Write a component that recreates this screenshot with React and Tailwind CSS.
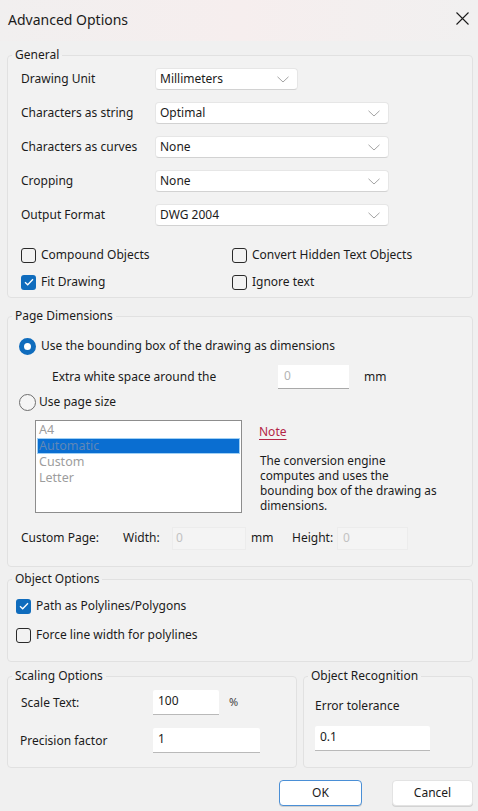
import React from "react";

const font = { fontFamily: '"Noto Sans", "Open Sans", sans-serif' };

function Chevron() {
  return (
    <svg width="12" height="7" viewBox="0 0 12 7" className="shrink-0">
      <path d="M0.5 0.8 L6 6 L11.5 0.8" fill="none" stroke="#a3a3a3" strokeWidth="1" />
    </svg>
  );
}

function Select({ value, width }) {
  return (
    <div
      className={`h-[22px] ${width} flex items-center justify-between pl-[4px] pr-[8px] bg-white border border-[#e6e6e6] border-b-[#d2d2d2] rounded-[4px] text-[12px] text-[#1b1b1b]`}
    >
      <span>{value}</span>
      <Chevron />
    </div>
  );
}

function Checkbox({ checked }) {
  if (checked) {
    return (
      <div className="w-[15px] h-[15px] rounded-[3px] bg-[#0f6cbd] flex items-center justify-center shrink-0">
        <svg width="10" height="8" viewBox="0 0 10 8">
          <path d="M1 4.2 L3.7 6.8 L9 1.2" fill="none" stroke="white" strokeWidth="1.3" />
        </svg>
      </div>
    );
  }
  return <div className="w-[15px] h-[15px] rounded-[3px] border-[1.5px] border-[#2a2a2a] shrink-0" />;
}

function CheckRow({ checked, label }) {
  return (
    <div className="h-[20px] flex items-center gap-[5px] text-[12px] text-[#1b1b1b]">
      <Checkbox checked={checked} />
      <span>{label}</span>
    </div>
  );
}

function Radio({ checked }) {
  if (checked) {
    return <div className="w-[17px] h-[17px] rounded-full border-[5px] border-[#0f6cbd] bg-white shrink-0" />;
  }
  return <div className="w-[17px] h-[17px] rounded-full border border-[#6e6e6e] bg-[#f5f5f5] shrink-0" />;
}

// Windows-style group box: legend sits on the top border, body keeps its own padding
function Group({ title, className = "", bodyClass = "", children }) {
  return (
    <fieldset className={`border border-[#e1e1e1] rounded-[4px] bg-[#f2f2f2] ${className}`}>
      <legend className="ml-[4px] px-[3px] text-[12px] leading-[16px] text-[#1b1b1b]">{title}</legend>
      <div className={bodyClass}>{children}</div>
    </fieldset>
  );
}

function TextInput({ value, width }) {
  return (
    <div
      className={`h-[25px] ${width} bg-white border-b border-[#b9b9b9] rounded-t-[2px] pl-[5px] pt-[2px] text-[12px] text-[#1b1b1b]`}
    >
      {value}
    </div>
  );
}

const noteLines = [
  "The conversion engine",
  "computes and uses the",
  "bounding box of the drawing as",
  "dimensions.",
];

export default function App() {
  const general = [
    ["Drawing Unit", "Millimeters", "w-[143px]"],
    ["Characters as string", "Optimal", "w-[234px]"],
    ["Characters as curves", "None", "w-[234px]"],
    ["Cropping", "None", "w-[234px]"],
    ["Output Format", "DWG 2004", "w-[234px]"],
  ];

  return (
    <div className="w-[478px] h-[811px] bg-[#f0f0f0] overflow-hidden" style={font}>
      {/* title bar */}
      <div className="h-[41px] flex items-center justify-between pl-[8px] pr-[9px] bg-gradient-to-r from-[#f1efef] via-[#f6eeee] to-[#f1f0f0]">
        <span className="text-[14px] text-[#1b1b1b] -mt-[3px]">Advanced Options</span>
        <svg width="13" height="13" viewBox="0 0 13 13" className="-mt-[4px]">
          <path d="M0.5 0.5 L12.5 12.5 M12.5 0.5 L0.5 12.5" stroke="#1b1b1b" strokeWidth="1.1" />
        </svg>
      </div>

      <div className="pl-[7px] pr-[5px] flex flex-col">
        {/* General */}
        <Group title="General" className="mt-[6px]" bodyClass="pl-[13px] pt-[5px] pb-[5px]">
          <div className="flex flex-col gap-[12px]">
            {general.map(([label, value, w]) => (
              <div key={label} className="flex items-center">
                <span className="w-[134px] text-[12px] text-[#1b1b1b]">{label}</span>
                <Select value={value} width={w} />
              </div>
            ))}
          </div>
          <div className="grid grid-cols-[211px_1fr] gap-y-[7px] mt-[19px]">
            <CheckRow label="Compound Objects" />
            <CheckRow label="Convert Hidden Text Objects" />
            <CheckRow checked label="Fit Drawing" />
            <CheckRow label="Ignore text" />
          </div>
        </Group>

        {/* Page Dimensions */}
        <Group title="Page Dimensions" className="mt-[10px]" bodyClass="pt-[12px] pb-[16px]">
          <div className="pl-[11px] h-[20px] flex items-center gap-[5px] text-[12px] text-[#1b1b1b]">
            <Radio checked />
            <span>Use the bounding box of the drawing as dimensions</span>
          </div>
          <div className="pl-[44px] mt-[9px] flex items-center text-[12px] text-[#1b1b1b]">
            <span className="w-[226px]">Extra white space around the</span>
            <div className="h-[24px] w-[71px] bg-white border-b border-[#a9a9a9] pl-[6px] pt-[2px] text-[#b3b3b3]">0</div>
            <span className="ml-[15px]">mm</span>
          </div>
          <div className="pl-[11px] mt-[3px] h-[20px] flex items-center gap-[3px] text-[12px] text-[#1b1b1b]">
            <Radio />
            <span>Use page size</span>
          </div>
          <div className="pl-[27px] mt-[8px] flex">
            <div className="w-[207px] h-[93px] border border-[#8d8d8d] bg-white p-[1px] text-[12.5px] text-[#9d9d9d]">
              <div className="h-[16px] leading-[16px] pl-[2px]">A4</div>
              <div className="h-[16px] leading-[14px] pl-[1px] bg-[#0a6ed1] border border-[#9fd0f5] text-[#5f87b7]">Automatic</div>
              <div className="h-[16px] leading-[16px] pl-[2px]">Custom</div>
              <div className="h-[16px] leading-[16px] pl-[2px]">Letter</div>
            </div>
            <div className="ml-[17px] pt-[4px] text-[12px] text-[#1b1b1b]">
              <div className="text-[#b42646] underline underline-offset-[3px] decoration-[1px] leading-[16px]">Note</div>
              <div className="mt-[13px] pl-[1px] flex flex-col">
                {noteLines.map((line) => (
                  <span key={line} className="block h-[15px] leading-[15px] text-[11.8px]">
                    {line}
                  </span>
                ))}
              </div>
            </div>
          </div>
          <div className="pl-[13px] mt-[13px] h-[24px] flex items-center text-[12px] text-[#1b1b1b]">
            <span className="w-[102px]">Custom Page:</span>
            <span className="w-[49px]">Width:</span>
            <div className="h-[23px] w-[74px] bg-[#f4f4f4] border border-[#ececec] pl-[3px] text-[#c2c2c2] leading-[19px]">0</div>
            <span className="ml-[5px] w-[41px]">mm</span>
            <span className="w-[45px]">Height:</span>
            <div className="h-[23px] w-[71px] bg-[#f4f4f4] border border-[#ececec] pl-[5px] text-[#c2c2c2] leading-[19px]">0</div>
          </div>
        </Group>

        {/* Object Options */}
        <Group title="Object Options" className="mt-[4px]" bodyClass="pl-[8px] pt-[9px] pb-[16px]">
          <div className="flex flex-col gap-[9px]">
            <CheckRow checked label="Path as Polylines/Polygons" />
            <CheckRow label="Force line width for polylines" />
          </div>
        </Group>

        {/* Scaling / Recognition */}
        <div className="mt-[6px] flex gap-[6px]">
          <Group title="Scaling Options" className="w-[290px]" bodyClass="pl-[13px] pt-[6px] pb-[14px]">
            <div className="flex items-center text-[12px] text-[#1b1b1b]">
              <span className="w-[132px]">Scale Text:</span>
              <TextInput value="100" width="w-[66px]" />
              <span className="ml-[10px] text-[11px] text-[#444]">%</span>
            </div>
            <div className="mt-[13px] flex items-center text-[12px] text-[#1b1b1b]">
              <span className="w-[132px] -ml-[1px] mr-[1px]">Precision factor</span>
              <TextInput value="1" width="w-[107px]" />
            </div>
          </Group>
          <Group title="Object Recognition" className="flex-1" bodyClass="pl-[11px] pt-[14px] pb-[16px]">
            <div className="h-[16px] leading-[16px] text-[12px] text-[#1b1b1b]">Error tolerance</div>
            <div className="mt-[12px]">
              <TextInput value="0.1" width="w-[115px]" />
            </div>
          </Group>
        </div>

        {/* buttons */}
        <div className="mt-[12px] flex justify-end gap-[30px] text-[12px] text-[#1b1b1b]">
          <button className="w-[83px] h-[26px] rounded-[4px] bg-white border border-[#4a8fd6] shadow-[0_1px_0_#cfcfcf]">OK</button>
          <button className="w-[81px] h-[26px] rounded-[4px] bg-white border border-[#e3e3e3] shadow-[0_1px_0_#d3d3d3]">Cancel</button>
        </div>
      </div>
    </div>
  );
}
